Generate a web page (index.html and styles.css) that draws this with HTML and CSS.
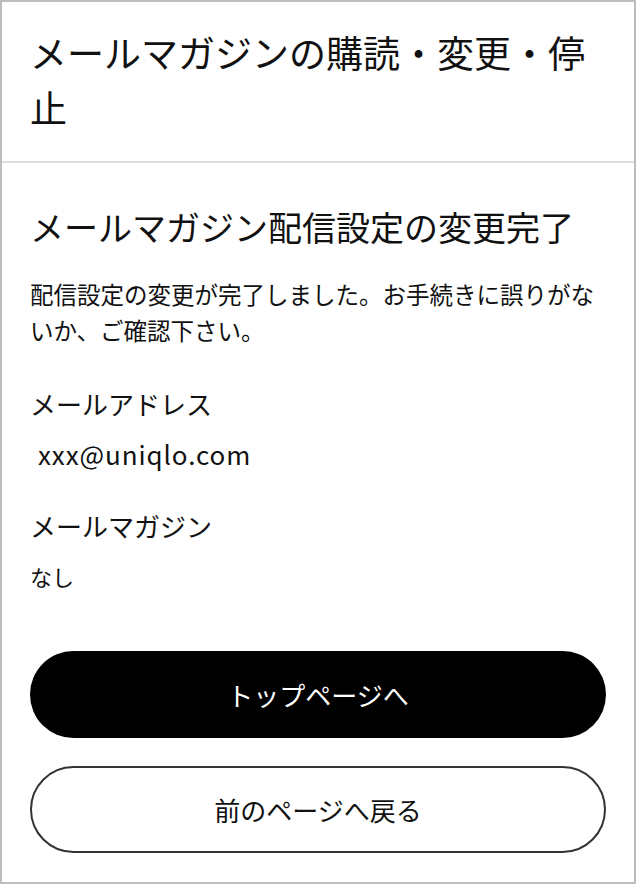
FILE: index.html
```html
<!DOCTYPE html>
<html lang="ja">
<head>
  <meta charset="UTF-8">
  <meta name="viewport" content="width=device-width, initial-scale=1.0">
  <title>メールマガジンの購読・変更・停止</title>
  <link rel="stylesheet" href="styles.css">
</head>
<body>
  <div class="frame">
    <header class="page-head">
      <h1>メールマガジンの購読・変更・停止</h1>
    </header>
    <main class="content">
      <h2>メールマガジン配信設定の変更完了</h2>
      <p class="lead">配信設定の変更が完了しました。お手続きに誤りがないか、ご確認下さい。</p>
      <dl class="info">
        <dt>メールアドレス</dt>
        <dd class="mail">xxx@uniqlo.com</dd>
        <dt>メールマガジン</dt>
        <dd>なし</dd>
      </dl>
      <div class="actions">
        <button class="btn primary">トップページへ</button>
        <button class="btn secondary">前のページへ戻る</button>
      </div>
    </main>
  </div>
</body>
</html>
```

FILE: styles.css
```css
* {
  box-sizing: border-box;
}
body {
  margin: 0;
  font-family: "Noto Sans CJK JP", "Noto Sans", sans-serif;
  color: #111111;
  background: #ffffff;
}
.frame {
  width: 636px;
  height: 884px;
  border: 2px solid #bdbdbd;
  overflow: hidden;
}
.page-head {
  padding: 23px 28px 26px;
  border-bottom: 2px solid #dddddd;
}
.page-head h1 {
  margin: 0;
  font-size: 37px;
  font-weight: 400;
  line-height: 55px;
}
.content {
  padding: 40px 28px 0;
}
.content h2 {
  margin: 0;
  font-size: 34px;
  font-weight: 400;
  line-height: 48px;
}
.lead {
  margin: 25px 0 0;
  font-size: 23.5px;
  line-height: 36px;
}
.info {
  margin: 36px 0 0;
}
.info dt {
  font-size: 26px;
  line-height: 40px;
}
.info dd {
  margin: 14px 0 0;
  font-size: 22px;
  line-height: 32px;
}
.info dd.mail {
  padding-left: 8px;
  font-size: 26px;
  letter-spacing: 0.9px;
  margin-bottom: 36px;
}
.actions {
  margin-top: 59px;
  display: flex;
  flex-direction: column;
  gap: 28px;
}
.btn {
  width: 100%;
  height: 87px;
  border-radius: 44px;
  font-family: inherit;
  font-size: 26px;
  cursor: pointer;
}
.primary {
  background: #000000;
  color: #ffffff;
  border: none;
}
.secondary {
  background: #ffffff;
  color: #111111;
  border: 2px solid #333333;
}
```
